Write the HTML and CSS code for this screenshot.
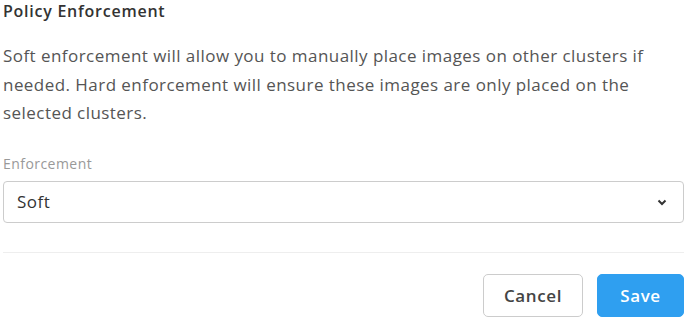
FILE: index.html
```html
<!DOCTYPE html>
<html lang="en">
<head>
    <meta charset="UTF-8">
    <meta name="viewport" content="width=device-width, initial-scale=1.0">
    <title>Policy Enforcement</title>
    <link rel="stylesheet" href="styles.css">
</head>
<body>
    <div class="panel">
        <h3 class="title">Policy Enforcement</h3>
        <p class="desc">Soft enforcement will allow you to manually place images on other clusters if needed. Hard enforcement will ensure these images are only placed on the selected clusters.</p>

        <label class="field-label" for="enforcement">Enforcement</label>
        <div class="select-wrap">
            <select id="enforcement" class="select">
                <option>Soft</option>
                <option>Hard</option>
            </select>
            <svg class="chevron" width="10" height="7" viewBox="0 0 10 7">
                <path d="M1.5 1.5 L5 5 L8.5 1.5" fill="none" stroke="#333" stroke-width="2"/>
            </svg>
        </div>

        <div class="actions">
            <button class="btn">Cancel</button>
            <button class="btn btn-primary">Save</button>
        </div>
    </div>
</body>
</html>
```

FILE: styles.css
```css
body {
    margin: 0;
    font-family: "Open Sans", Arial, sans-serif;
    background-color: #fff;
    color: #555;
}
.panel {
    width: 681px;
    margin-left: 3px;
}
.title {
    margin: 0;
    font-size: 16px;
    line-height: 22px;
    font-weight: 600;
    letter-spacing: 0.75px;
    color: #333;
}
.desc {
    margin: 20px 0 0;
    font-size: 17px;
    line-height: 28.5px;
    letter-spacing: 0.45px;
    color: #555;
}
.field-label {
    display: block;
    margin-top: 27px;
    font-size: 14px;
    line-height: 18px;
    letter-spacing: 0.45px;
    color: #999;
}
.select-wrap {
    position: relative;
    margin-top: 8px;
}
.select {
    width: 100%;
    height: 42px;
    padding: 0 13px;
    font-family: inherit;
    font-size: 17px;
    letter-spacing: 0.5px;
    color: #333;
    background: #fff;
    border: 1px solid #ccc;
    border-radius: 4px;
    appearance: none;
    -webkit-appearance: none;
}
.chevron {
    position: absolute;
    right: 17px;
    top: 18px;
    pointer-events: none;
}
.actions {
    display: flex;
    justify-content: flex-end;
    gap: 14px;
    margin-top: 29px;
    padding-top: 21px;
    border-top: 1px solid #eee;
}
.btn {
    height: 43px;
    padding: 0;
    font-family: inherit;
    font-size: 17px;
    font-weight: 600;
    letter-spacing: 0.6px;
    color: #444;
    background: #fff;
    border: 1px solid #ccc;
    border-radius: 5px;
    cursor: pointer;
}
.btn:first-child {
    width: 100px;
}
.btn-primary {
    width: 87px;
    color: #fff;
    background-color: #2f9ff0;
    border-color: #2f9ff0;
}
```
